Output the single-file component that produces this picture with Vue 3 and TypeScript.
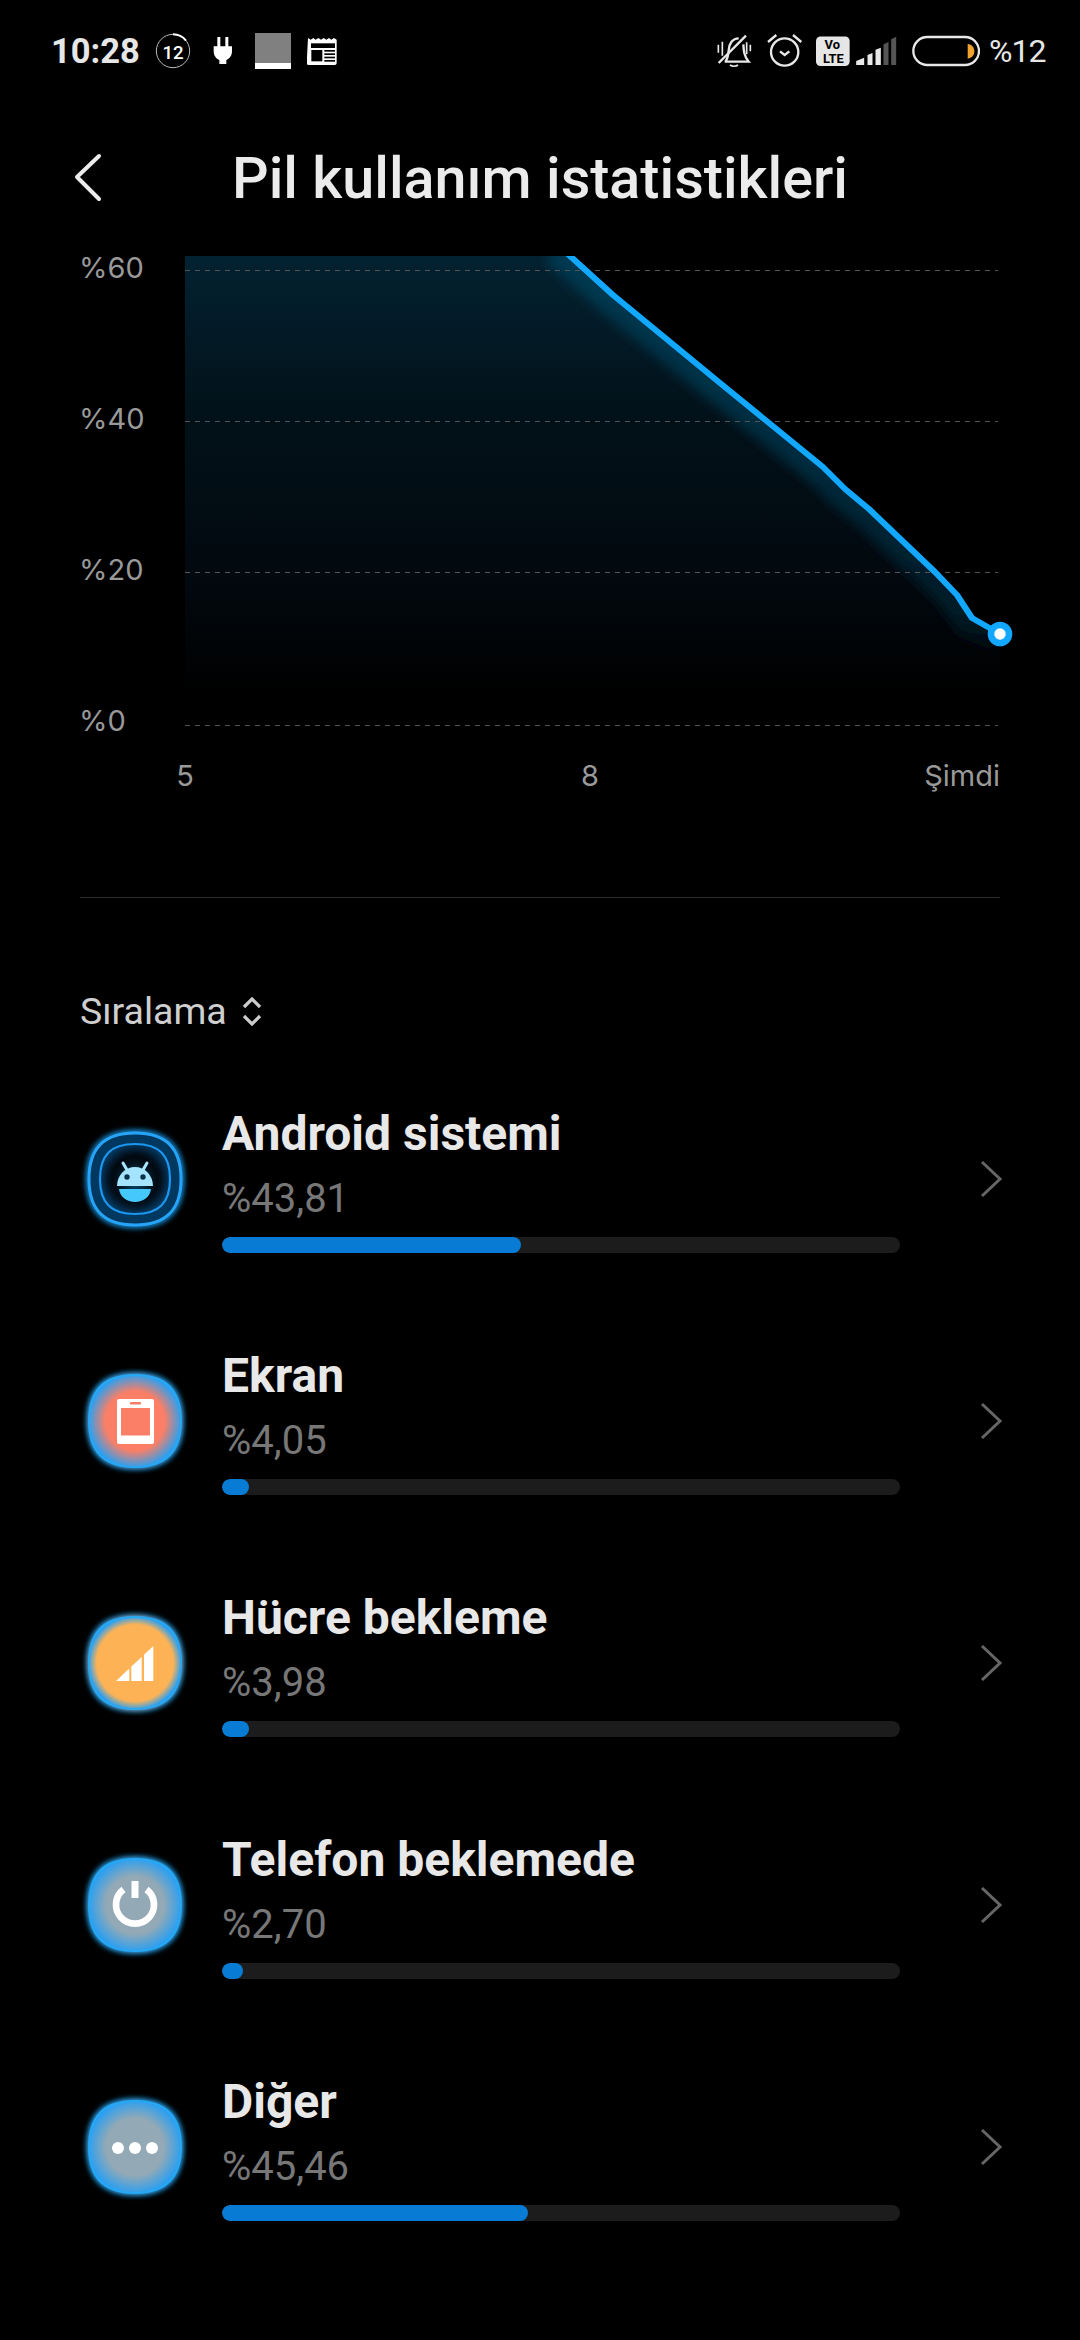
<script setup lang="ts">
interface UsageRow {
  name: string
  value: string
  fill: number
  icon: 'android' | 'screen' | 'signal' | 'power' | 'more'
  core: string
  coreStop: number
}

const rows: UsageRow[] = [
  { name: 'Android sistemi', value: '%43,81', fill: 299, icon: 'android', core: '#000', coreStop: 0.5 },
  { name: 'Ekran', value: '%4,05', fill: 27, icon: 'screen', core: '#fb7f66', coreStop: 0.62 },
  { name: 'Hücre bekleme', value: '%3,98', fill: 27, icon: 'signal', core: '#fdb355', coreStop: 0.8 },
  { name: 'Telefon beklemede', value: '%2,70', fill: 21, icon: 'power', core: '#93a9b5', coreStop: 0.6 },
  { name: 'Diğer', value: '%45,46', fill: 306, icon: 'more', core: '#93a9b5', coreStop: 0.6 }
]

const yLabels = ['%60', '%40', '%20', '%0']
const gridLines = [23.5, 174.5, 325.5, 478.5]

const squircle = 'M60 14C91 14 106 29 106 60C106 91 91 106 60 106C29 106 14 91 14 60C14 29 29 14 60 14Z'
const innerRing = 'M60 25C84 25 95 36 95 60C95 84 84 95 60 95C36 95 25 84 25 60C25 36 36 25 60 25Z'

// chart line, in svg coordinates
const lineBody = 'L428 48L535 136L638 220L660 242L684 262L750 325L772 348L787 371L815 387'
const linePath = 'M374 -1' + lineBody
const areaPath = 'M385 9' + lineBody + 'L815 490L0 490L0 9Z'
</script>

<template>
  <div class="screen">
    <div class="status">
      <span class="time">10:28</span>
      <svg class="st-ring" width="36" height="36" viewBox="465 97 108 108">
        <circle cx="519" cy="151" r="50" fill="none" stroke="#bbb" stroke-width="3" />
        <path d="M519 101A50 50 0 0 1 558 120" fill="none" stroke="#fff" stroke-width="6" />
        <text x="519" y="174" text-anchor="middle" class="ring-num">12</text>
      </svg>
      <svg class="st-plug" width="20" height="28" viewBox="640 112 60 84">
        <path fill="#fff" d="M653 112h9v28h15v-28h9v28h11v14c0 14-8 24-17 27v12h-21v-12c-9-3-17-13-17-27v-14h11z" />
      </svg>
      <div class="st-square"></div>
      <svg class="st-news" width="32" height="30" viewBox="922 108 96 90">
        <path fill="#fff" d="M925 114l8 5 8-5 7 5 8-5 8 5 8-5 8 5 8-5 7 5 8-5 8 5v70a6 6 0 0 1-6 6h-78a6 6 0 0 1-6-6z" />
        <rect x="934" y="130" width="72" height="14" fill="#000" />
        <rect x="935" y="150" width="33" height="34" fill="#000" />
        <rect x="974" y="150" width="32" height="5" fill="#000" />
        <rect x="974" y="160" width="32" height="5" fill="#000" />
        <rect x="974" y="170" width="32" height="5" fill="#000" />
        <rect x="974" y="180" width="32" height="5" fill="#000" />
      </svg>

      <div class="st-right">
        <svg width="36" height="36" viewBox="108 100 108 108" fill="none" stroke="#e8e8e8" stroke-width="7">
          <path d="M136 186c8-10 9-22 10-34c1-20 12-36 30-36M190 134c1 18 2 36 16 52H134" />
          <path d="M116 190L198 108" />
          <path d="M115 135v24M127 126v42M200 128v36M211 135v20" stroke-width="5" />
          <path d="M150 196c6 5 18 5 24 0" stroke-width="5" />
        </svg>
        <svg class="st-alarm" width="36" height="36" viewBox="262 100 108 108" fill="none" stroke="#e8e8e8" stroke-width="7">
          <circle cx="315" cy="157" r="41" />
          <path d="M301 155l14 11l14-11" />
          <path d="M265 127L290 106M340 106L365 127" />
        </svg>
        <svg class="st-volte" width="34" height="30" viewBox="408 109 100 88">
          <rect x="408" y="110" width="99" height="87" rx="13" fill="#e6e6e6" />
          <text x="456" y="147" text-anchor="middle" class="volte">Vo</text>
          <text x="459" y="187" text-anchor="middle" class="volte">LTE</text>
        </svg>
        <svg class="st-signal" width="41" height="30" viewBox="528 106 122 90">
          <path fill="#e8e8e8" d="M528 193v-12l24-10v22zM562 193v-30l15-6v36zM586 193v-46l16-6v52z" />
          <path fill="#555" d="M610 193v-62l15-7v69zM633 193v-77l15-8v85z" />
        </svg>
        <svg class="st-batt" width="68" height="32" viewBox="695 105 204 96">
          <rect x="699" y="111" width="197" height="84" rx="42" fill="none" stroke="#e8e8e8" stroke-width="7" />
          <path fill="#f0a32e" d="M862 132c13 1 20 11 20 22s-7 21-20 22z" />
        </svg>
        <span class="pct">%12</span>
      </div>
    </div>

    <div class="nav">
      <svg class="back" width="30" height="50" viewBox="0 0 30 50" fill="none" stroke="#ececec" stroke-width="4" stroke-linecap="round" stroke-linejoin="round">
        <path d="M26 3L4 24L26 46" />
      </svg>
      <h1 class="title">Pil kullanım istatistikleri</h1>
    </div>

    <div class="chart">
      <div class="y-labels">
        <span v-for="l in yLabels" :key="l">{{ l }}</span>
      </div>
      <svg class="plot" width="835" height="490" viewBox="0 0 835 490">
        <defs>
          <linearGradient id="areaFill" gradientUnits="userSpaceOnUse" x1="0" y1="9" x2="0" y2="450">
            <stop offset="0" stop-color="#032231" />
            <stop offset="0.37" stop-color="#021119" />
            <stop offset="0.72" stop-color="#02090f" />
            <stop offset="1" stop-color="#000" />
          </linearGradient>
          <linearGradient id="bandFade" gradientUnits="userSpaceOnUse" x1="0" y1="9" x2="0" y2="430">
            <stop offset="0" stop-color="#063a52" />
            <stop offset="0.5" stop-color="#032a3c" />
            <stop offset="0.85" stop-color="#011a26" />
            <stop offset="1" stop-color="#000" />
          </linearGradient>
          <clipPath id="areaClip">
            <path :d="areaPath" />
          </clipPath>
          <clipPath id="lineClip">
            <rect x="0" y="9" width="835" height="481" />
          </clipPath>
          <filter id="soft" filterUnits="userSpaceOnUse" x="300" y="-40" width="560" height="500">
            <feGaussianBlur stdDeviation="6" />
          </filter>
        </defs>
        <path :d="areaPath" fill="url(#areaFill)" />
        <g clip-path="url(#areaClip)">
          <path :d="linePath" fill="none" stroke="url(#bandFade)" stroke-width="40" filter="url(#soft)" />
        </g>
        <line
          v-for="y in gridLines"
          :key="y"
          x1="0"
          x2="813"
          :y1="y"
          :y2="y"
          stroke="#555"
          stroke-width="1"
          stroke-dasharray="5 5"
        />
        <g clip-path="url(#lineClip)">
          <path :d="linePath" fill="none" stroke="#12a8ff" stroke-width="6" stroke-linejoin="round" />
        </g>
        <circle cx="815" cy="387" r="9" fill="#fff" stroke="#12a8ff" stroke-width="6.6" />
      </svg>
    </div>

    <div class="x-labels">
      <span class="x-5">5</span>
      <span class="x-8">8</span>
      <span class="x-now">Şimdi</span>
    </div>

    <div class="divider"></div>

    <div class="sort">
      <span>Sıralama</span>
      <svg width="20" height="29" viewBox="0 0 20 29" fill="none" stroke="#ccc" stroke-width="3.2">
        <path d="M2 10L10 2L18 10M2 19L10 27L18 19" />
      </svg>
    </div>

    <div class="list">
      <div v-for="(row, i) in rows" :key="row.name" class="row">
        <svg class="app-icon" width="120" height="120" viewBox="0 0 120 120">
          <defs>
            <radialGradient :id="'core' + i" cx="0.5" cy="0.5" r="0.52">
              <stop :offset="row.coreStop" :stop-color="row.core" />
              <stop offset="0.98" stop-color="#2c9ff0" />
            </radialGradient>
            <radialGradient id="ringInner" cx="0.5" cy="0.5" r="0.52">
              <stop offset="0.62" stop-color="#010409" />
              <stop offset="1" stop-color="#063c66" />
            </radialGradient>
            <radialGradient id="headGlow" cx="0.5" cy="0.5" r="0.5">
              <stop offset="0" stop-color="#0a5a86" />
              <stop offset="1" stop-color="#020a12" stop-opacity="0" />
            </radialGradient>
            <filter :id="'glow' + i" x="-25%" y="-25%" width="150%" height="150%">
              <feGaussianBlur stdDeviation="3.2" result="b" />
              <feMerge>
                <feMergeNode in="b" />
                <feMergeNode in="b" />
                <feMergeNode in="SourceGraphic" />
              </feMerge>
            </filter>
          </defs>

          <template v-if="row.icon === 'android'">
            <path :d="squircle" fill="#04375e" stroke="#26a4f8" stroke-width="3" :filter="`url(#glow${i})`" />
            <path :d="innerRing" fill="url(#ringInner)" stroke="#1c96ee" stroke-width="2.2" />
            <circle cx="60" cy="62" r="30" fill="url(#headGlow)" />
            <path d="M48 44L52 51M72 44L68 51" stroke="#a8e6ff" stroke-width="3" stroke-linecap="round" />
            <path d="M42 67a18 19 0 0 1 36 0z" fill="#a4e4ff" />
            <path d="M44 70h32c-1 8-8 13-16 13s-15-5-16-13z" fill="#45c8fc" />
            <circle cx="52" cy="58" r="2.7" fill="#08324a" />
            <circle cx="68" cy="58" r="2.7" fill="#08324a" />
          </template>
          <template v-else>
            <path :d="squircle" :fill="`url(#core${i})`" stroke="#25a9f5" stroke-width="1.8" :filter="`url(#glow${i})`" />
            <path
              v-if="row.icon === 'screen'"
              fill="#fff"
              fill-rule="evenodd"
              d="M42 40a2 2 0 0 1 2-2h33a2 2 0 0 1 2 2v41a2 2 0 0 1-2 2h-33a2 2 0 0 1-2-2zM46 47v27.500h29v-27.500zM56 41a1.200 1.200 0 0 0 0 2.400h9a1.200 1.200 0 0 0 0-2.400z"
            />
            <path
              v-else-if="row.icon === 'signal'"
              fill="#fff"
              d="M41 78L54.300 65.500V78zM56.300 63.600L66.700 53.900V78H56.300zM69 51.700L78.300 43V78H69z"
            />
            <g v-else-if="row.icon === 'power'" fill="none" stroke="#fff">
              <path d="M48.500 44.500A19 19 0 1 0 71.500 44.500" stroke-width="6.700" />
              <path d="M60 36V53" stroke-width="7" />
            </g>
            <g v-else fill="#fff">
              <circle cx="43" cy="61" r="6" />
              <circle cx="60" cy="61" r="6" />
              <circle cx="77" cy="61" r="6" />
            </g>
          </template>
        </svg>

        <div class="row-main">
          <div class="row-name">{{ row.name }}</div>
          <div class="row-value">{{ row.value }}</div>
          <div class="track">
            <div class="fill" :style="{ width: row.fill + 'px' }"></div>
          </div>
        </div>

        <svg class="row-arrow" width="24" height="38" viewBox="0 0 24 38" fill="none" stroke="#666" stroke-width="3">
          <path d="M3 2L21 19L3 36" />
        </svg>
      </div>
    </div>
  </div>
</template>

<style scoped>
.screen {
  width: 1080px;
  height: 2340px;
  overflow: hidden;
  background: #000;
  color: #eee;
  font-family: Roboto, "Liberation Sans", sans-serif;
}

.status {
  height: 102px;
  display: flex;
  align-items: center;
  padding-left: 51px;
  box-sizing: border-box;
}

.time {
  font-size: 34.500px;
  font-weight: 700;
  color: #e6e6e6;
  width: 87px;
  white-space: nowrap;
}

.st-ring {
  margin-left: 17px;
}

.ring-num {
  font-size: 56px;
  font-weight: 500;
  fill: #fff;
  font-family: Roboto, sans-serif;
}

.st-plug {
  margin-left: 22px;
}

.st-square {
  margin-left: 22px;
  width: 36px;
  height: 36px;
  box-sizing: border-box;
  background: #808080;
  border-bottom: 6px solid #fff;
}

.st-news {
  margin-left: 16px;
}

.st-right {
  margin-left: 377px;
  display: flex;
  align-items: center;
}

.st-alarm {
  margin-left: 15px;
}

.st-volte {
  margin-left: 13px;
}

.volte {
  font-size: 38px;
  font-weight: 700;
  fill: #000;
  font-family: Roboto, sans-serif;
}

.st-signal {
  margin-left: 6px;
}

.st-batt {
  margin-left: 15px;
}

.pct {
  margin-left: 9px;
  font-size: 32px;
  color: #e6e6e6;
  letter-spacing: -1px;
}

.nav {
  height: 145px;
  box-sizing: border-box;
  padding: 7px 0 0 73px;
  display: flex;
  align-items: center;
}

.title {
  margin: 0 0 0 129px;
  font-size: 57.500px;
  font-weight: 500;
  color: #ebebeb;
  white-space: nowrap;
}

.chart {
  display: flex;
  height: 490px;
  padding-left: 79px;
}

.y-labels {
  width: 106px;
  flex: none;
  display: flex;
  flex-direction: column;
  gap: 111px;
  padding-top: 1px;
  font-family: Inter, Roboto, sans-serif;
  font-size: 29px;
  color: #999;
}

.y-labels span {
  height: 40px;
  line-height: 40px;
}

.plot {
  display: block;
  flex: none;
}

.x-labels {
  display: flex;
  height: 40px;
  margin-top: 19px;
  font-family: Inter, Roboto, sans-serif;
  font-size: 29px;
  line-height: 40px;
  color: #999;
}

.x-5,
.x-8 {
  width: 18px;
  text-align: center;
}

.x-5 {
  margin-left: 176px;
}

.x-8 {
  margin-left: 387px;
}

.x-now {
  margin-left: auto;
  margin-right: 80px;
}

.divider {
  margin: 101px 80px 0;
  height: 1px;
  background: #2a2a2a;
}

.sort {
  margin-top: 89px;
  padding-left: 80px;
  display: flex;
  align-items: center;
  gap: 15px;
  height: 48px;
  font-size: 37.500px;
  color: #cfcfcf;
}

.list {
  margin-top: 23px;
}

.row {
  height: 242px;
  display: flex;
  align-items: center;
  padding-left: 75px;
}

.app-icon {
  flex: none;
  overflow: visible;
}

.row-main {
  width: 678px;
  margin-left: 27px;
}

.row-name {
  font-size: 48px;
  font-weight: 700;
  line-height: 56px;
  color: #e8e8e8;
  white-space: nowrap;
}

.row-value {
  margin-top: 12px;
  font-size: 40px;
  line-height: 50px;
  color: #777;
}

.track {
  margin-top: 13px;
  height: 16px;
  border-radius: 8px;
  background: #1c1c1c;
  overflow: hidden;
}

.fill {
  height: 100%;
  border-radius: 8px;
  background: #087cd4;
}

.row-arrow {
  margin-left: 79px;
  flex: none;
}
</style>

<style>
html,
body {
  background: #000;
}
</style>
